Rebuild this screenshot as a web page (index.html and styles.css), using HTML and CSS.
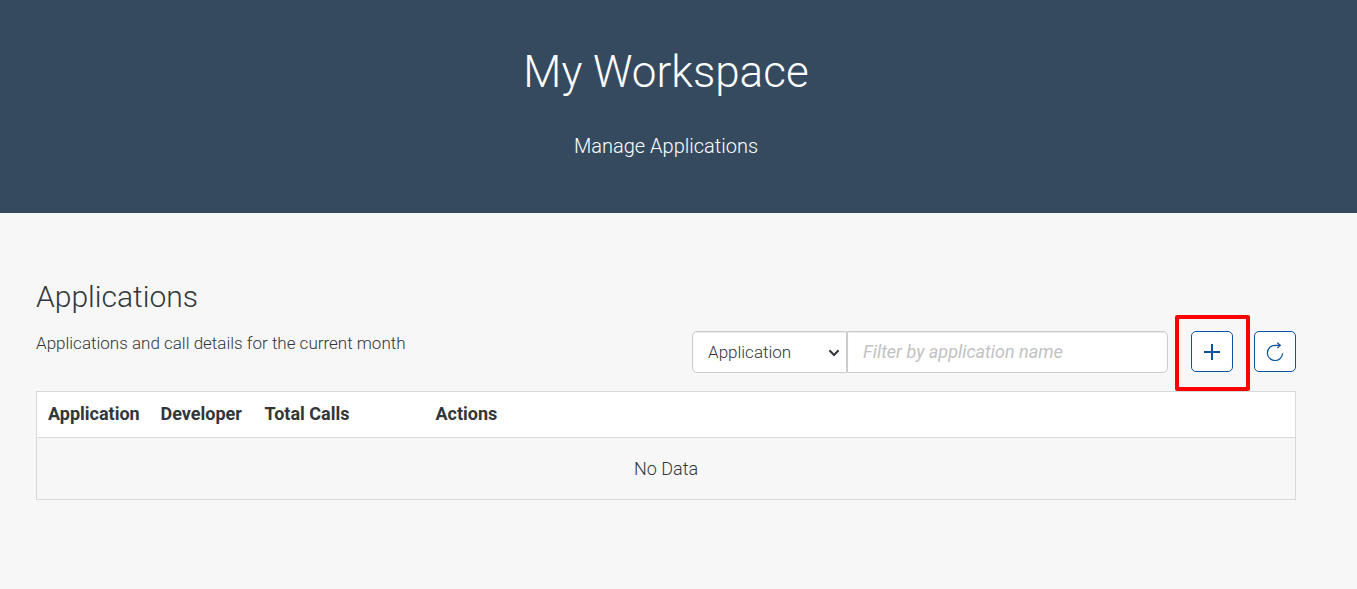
FILE: index.html
```html
<!DOCTYPE html>
<html lang="en">
<head>
<meta charset="utf-8">
<meta name="viewport" content="width=device-width, initial-scale=1">
<title>My Workspace</title>
<link rel="stylesheet" href="styles.css">
</head>
<body>
<header class="hero">
  <h1 class="hero-title">My Workspace</h1>
  <p class="hero-subtitle">Manage Applications</p>
</header>
<main class="content">
  <h2 class="section-title">Applications</h2>
  <div class="toolbar">
    <p class="section-note">Applications and call details for the current month</p>
    <div class="controls">
      <div class="filter">
        <div class="select-wrap">
          <select class="filter-type" aria-label="Filter type">
            <option>Application</option>
            <option>Developer</option>
          </select>
          <svg class="chevron" viewBox="0 0 12 8" aria-hidden="true"><path d="M1.4 1.3 6 6 10.6 1.3"/></svg>
        </div>
        <input class="filter-text" type="text" placeholder="Filter by application name" aria-label="Filter by application name">
      </div>
      <div class="highlight">
        <button class="icon-button" type="button" aria-label="Add application">
          <svg class="icon icon-plus" viewBox="0 0 20 20" aria-hidden="true"><path d="M10 2v16M2 10h16"/></svg>
        </button>
      </div>
      <button class="icon-button" type="button" aria-label="Refresh">
        <svg class="icon icon-refresh" viewBox="0 0 20 20" aria-hidden="true"><path d="M17.6 11.2A7.6 7.6 0 1 1 10 3.3h5.2M12.3.7l3 2.6-3 2.7"/></svg>
      </button>
    </div>
  </div>
  <table class="apps">
    <thead>
      <tr>
        <th class="col-application" scope="col">Application</th>
        <th class="col-developer" scope="col">Developer</th>
        <th class="col-calls" scope="col">Total Calls</th>
        <th scope="col">Actions</th>
      </tr>
    </thead>
    <tbody>
      <tr><td class="empty" colspan="4">No Data</td></tr>
    </tbody>
  </table>
</main>
</body>
</html>
```
FILE: styles.css
```css
* {
  box-sizing: border-box;
}

body {
  margin: 0;
  background: #f7f7f7;
  color: #32363a;
  font: 300 18px/24px Roboto, "Open Sans", sans-serif;
}

h1, h2, p {
  margin: 0;
  font-weight: 300;
}

.hero {
  padding: 44px 25px 53px 0;
  background: #354a5f;
  color: #fff;
  text-align: center;
}

.hero-title {
  font-size: 44px;
  line-height: 56px;
}

.hero-subtitle {
  margin-top: 32px;
  font-size: 20px;
  line-height: 28px;
}

.content {
  padding: 64px 61px 89px 36px;
}

.section-title {
  font-size: 30px;
  line-height: 40px;
}

.section-note {
  font-size: 17px;
}

.toolbar {
  display: flex;
  justify-content: space-between;
  align-items: flex-start;
  gap: 24px;
  margin-top: 14px;
}

.controls {
  display: flex;
  align-items: flex-start;
}

.filter {
  display: flex;
  height: 42px;
  margin-right: 7px;
}

.select-wrap {
  position: relative;
  width: 155px;
}

.filter-type,
.filter-text {
  height: 100%;
  margin: 0;
  border: 1px solid #ccc;
  background: #fff;
  box-shadow: inset 0 1px 1px rgba(0, 0, 0, 0.08);
  color: inherit;
  font: inherit;
  outline: none;
}

.filter-type {
  width: 100%;
  padding: 0 32px 0 15px;
  border-radius: 5px 0 0 5px;
  font-size: 17px;
  appearance: none;
}

.filter-text {
  width: 321px;
  padding: 0 15px 2px;
  border-radius: 0 5px 5px 0;
}

.filter-text::placeholder {
  color: #c2c2c2;
  font-style: italic;
  font-weight: 400;
  opacity: 1;
}

.chevron {
  position: absolute;
  top: 18px;
  right: 7px;
  width: 12px;
  height: 8px;
  fill: none;
  stroke: #32363a;
  stroke-width: 2;
  pointer-events: none;
}

.highlight {
  display: flex;
  margin: -16px 4px -19px 0;
  padding: 12px 13px 15px 12px;
  border: 4px solid #f00;
  border-radius: 2px;
}

.icon-button {
  display: flex;
  align-items: center;
  justify-content: center;
  width: 42px;
  height: 41px;
  padding: 0;
  border: 1px solid #0854a0;
  border-radius: 5px;
  background: #fff;
  color: #0854a0;
}

.icon {
  width: 20px;
  height: 20px;
  fill: none;
  stroke: currentColor;
}

.icon-plus {
  stroke-width: 2;
}

.icon-refresh {
  stroke-width: 1.2;
}

.apps {
  width: 100%;
  margin-top: 18px;
  border: 1px solid #d9d9d9;
  border-collapse: collapse;
  table-layout: fixed;
}

.apps th {
  height: 46px;
  padding: 0 11px 2px;
  background: #fff;
  font-weight: 700;
  text-align: left;
  white-space: nowrap;
}

.col-application {
  width: 113px;
}

.col-developer {
  width: 104px;
}

.col-calls {
  width: 171px;
}

.apps .empty {
  height: 62px;
  padding: 0;
  border-top: 1px solid #d9d9d9;
  text-align: center;
}
```
